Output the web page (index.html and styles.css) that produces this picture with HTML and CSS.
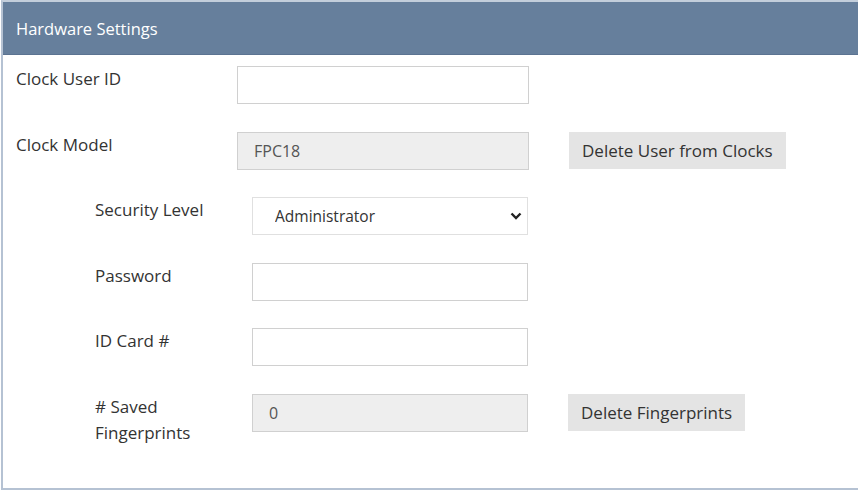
FILE: index.html
```html
<!DOCTYPE html>
<html>
<head>
<meta charset="utf-8">
<link rel="stylesheet" href="styles.css">
</head>
<body>
<div class="panel">
  <div class="panel-header">Hardware Settings</div>
  <div class="panel-body">
    <div class="row">
      <div class="label">Clock User ID</div>
      <input class="field" type="text" value="">
    </div>
    <div class="row">
      <div class="label">Clock Model</div>
      <input class="field disabled" type="text" value="FPC18" disabled>
      <button class="btn">Delete User from Clocks</button>
    </div>
    <div class="row sub">
      <div class="label">Security Level</div>
      <div class="select-wrap">
        <select class="field select"><option>Administrator</option></select>
        <svg class="chev" width="12" height="8" viewBox="0 0 12 8"><path d="M1.5 1.5 L6 6 L10.5 1.5" fill="none" stroke="#222" stroke-width="2.4"/></svg>
      </div>
    </div>
    <div class="row sub">
      <div class="label">Password</div>
      <input class="field" type="password" value="">
    </div>
    <div class="row sub">
      <div class="label">ID Card #</div>
      <input class="field" type="text" value="">
    </div>
    <div class="row sub">
      <div class="label"># Saved<br>Fingerprints</div>
      <input class="field disabled" type="text" value="0" disabled>
      <button class="btn">Delete Fingerprints</button>
    </div>
  </div>
</div>
</body>
</html>
```
FILE: styles.css
```css
html, body {
  margin: 0;
  padding: 0;
  background: #fff;
  overflow: hidden;
}
body {
  font-family: "Open Sans", "Liberation Sans", sans-serif;
  color: #333;
}
.panel {
  width: 880px;
  margin-left: 1px;
  border-top: 2px solid #c3cedb;
  border-left: 2px solid #b5c2d3;
  border-bottom: 2px solid #b5c2d3;
}
.panel-header {
  height: 52px;
  background: #667f9c;
  border-bottom: 1px solid #5b7391;
  color: #fff;
  font-size: 16.5px;
  line-height: 53px;
  padding-left: 13px;
}
.panel-body {
  padding: 11px 0 42px 13px;
  display: flex;
  flex-direction: column;
  gap: 27.5px;
}
.row {
  display: grid;
  grid-template-columns: 221px 292px auto;
  align-items: start;
}
.row.sub {
  padding-left: 79px;
  grid-template-columns: 157px 276px auto;
}
.label {
  font-size: 17px;
  line-height: 26px;
  color: #333;
}
.field {
  box-sizing: border-box;
  height: 38px;
  width: 100%;
  margin: 0;
  border: 1px solid #d0d0d0;
  background: #fff;
  font-family: "Open Sans", "Liberation Sans", sans-serif;
  font-size: 16px;
  color: #555;
  padding: 0 16px;
  outline: none;
}
.field.disabled {
  background: #eeeeee;
  color: #555;
}
.select-wrap {
  position: relative;
  width: 100%;
}
.select {
  appearance: none;
  -webkit-appearance: none;
  padding-left: 22px;
  font-size: 15.5px;
  color: #333;
  border-color: #e0e0e0;
}
.chev {
  position: absolute;
  right: 6px;
  top: 15px;
}
.btn {
  margin-left: 40px;
  height: 37px;
  border: none;
  background: #e4e4e4;
  color: #333;
  font-family: "Open Sans", "Liberation Sans", sans-serif;
  font-size: 17px;
  padding: 0 13px;
  justify-self: start;
  border-radius: 0;
}
```
